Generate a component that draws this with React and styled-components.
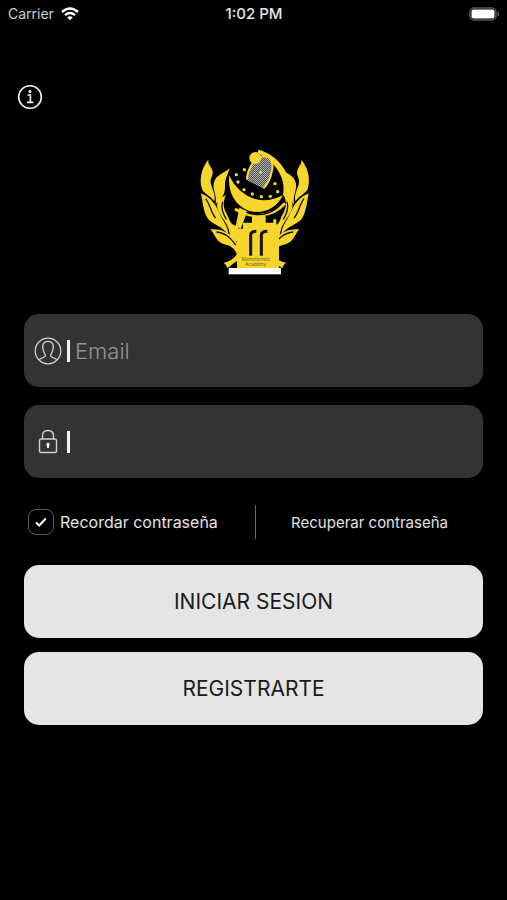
import React, { useState } from 'react';
import styled, { createGlobalStyle } from 'styled-components';

const GlobalStyle = createGlobalStyle`
  * {
    box-sizing: border-box;
  }

  body {
    margin: 0;
    background: #000000;
    font-family: Inter, 'Liberation Sans', sans-serif;
  }
`;

const Screen = styled.div`
  min-height: 100vh;
  background: #000000;
  color: #e6e6e6;
`;

const StatusBar = styled.header`
  display: grid;
  grid-template-columns: 1fr auto 1fr;
  align-items: center;
  height: 27px;
  padding: 0 7px 0 8px;
  font-size: 14px;
`;

const Carrier = styled.div`
  display: flex;
  align-items: center;
  gap: 6px;
  color: #d0d0d0;
`;

const Time = styled.time`
  font-size: 15px;
  font-weight: 500;
`;

const Battery = styled.svg`
  justify-self: end;
`;

const TopBar = styled.div`
  display: flex;
  padding: 57px 17px 0;
`;

const InfoButton = styled.button`
  display: flex;
  padding: 0;
  border: none;
  background: none;
  color: #f2f2f2;
  cursor: pointer;
`;

const Logo = styled.svg`
  display: block;
  margin: 34px auto;
`;

const Form = styled.form`
  display: flex;
  flex-direction: column;
  padding: 0 24px;
`;

const Field = styled.label`
  display: flex;
  align-items: center;
  height: 73px;
  margin-bottom: 18px;
  padding: 0 10px;
  border-radius: 15px;
  background: #333333;
`;

const FieldIcon = styled.span`
  display: flex;
  justify-content: center;
  width: 28px;
  color: #d0d0d0;
`;

const Bar = styled.span`
  width: 3px;
  height: 22px;
  margin: 0 5px;
  background: #f2f2f2;
`;

const Input = styled.input`
  flex: 1;
  min-width: 0;
  padding: 0;
  border: none;
  outline: none;
  background: none;
  color: #ffffff;
  font-family: inherit;
  font-size: 22px;
  font-weight: 300;

  &::placeholder {
    color: #949494;
    opacity: 1;
  }
`;

const Options = styled.div`
  display: grid;
  grid-template-columns: 1fr 1px 1fr;
  align-items: center;
  height: 52px;
  margin-bottom: 17px;
  padding-left: 4px;
`;

const Remember = styled.label`
  display: flex;
  align-items: center;
  gap: 6px;
  font-size: 16px;
  white-space: nowrap;
`;

const Checkbox = styled.input`
  appearance: none;
  width: 26px;
  height: 26px;
  margin: 0;
  border: 1px solid #5c5c5c;
  border-radius: 8px;

  &:checked {
    background: url("data:image/svg+xml,%3Csvg xmlns='http://www.w3.org/2000/svg' viewBox='0 0 24 24' fill='none' stroke='%23ffffff' stroke-width='2'%3E%3Cpath d='M7 12.5l3.2 3 6.6-7'/%3E%3C/svg%3E")
      center / 24px no-repeat;
  }
`;

const Divider = styled.span`
  height: 34px;
  background: #6c6c6c;
`;

const Recover = styled.a`
  justify-self: center;
  color: #e0e0e0;
  font-size: 15px;
  text-decoration: none;
  white-space: nowrap;
`;

const Button = styled.button`
  height: 73px;
  margin-bottom: 14px;
  border: none;
  border-radius: 15px;
  background: #e5e5e5;
  color: #1a1a1a;
  font-family: inherit;
  font-size: 21px;
  font-weight: 400;
  cursor: pointer;
`;

const Branch = () => (
  <g fill="#f6d62c">
    <path d="M40 47C22 69 12 99 20 132C25 149 42 151 58 172C63 149 50 134 47 116C45 101 56 95 52 79C49 66 38 62 40 47Z" />
    <path d="M104 73C84 90 61 93 56 119C53 138 66 153 62 180C78 168 91 152 90 126C89 106 98 94 104 73Z" />
    <path d="M18 148C24 181 27 210 40 226C55 244 80 243 100 274C100 247 84 232 76 213C64 184 48 160 18 148Z" />
    <path d="M93 153C64 166 61 184 73 206C84 227 103 242 105 278L130 296V246C114 246 106 238 101 222C93 202 77 188 93 153Z" />
    <path d="M46 256C60 272 63 290 80 298C97 306 116 302 128 336L137 318C126 288 98 251 46 256Z" />
    <path d="M86 356C104 353 116 344 126 330L140 346C123 350 111 363 97 373C95 364 91 361 86 356Z" />
    <path
      d="M32 164C45 180 48 207 62 222M83 173C76 195 86 211 94 226M64 264C94 267 108 284 122 303"
      fill="none"
      stroke="#171300"
      strokeWidth="4"
    />
  </g>
);

const AcademyLogo = () => (
  <Logo width="118" height="136" viewBox="0 0 354 408" role="img" aria-label="Academy">
    <defs>
      <pattern id="mesh" width="6" height="6" patternUnits="userSpaceOnUse">
        <rect width="6" height="6" fill="#b4b4b4" />
        <path d="M0 0h3v3h-3zM3 3h3v3h-3z" fill="#4b4b4b" />
      </pattern>
    </defs>
    <Branch />
    <g transform="matrix(-1 0 0 1 359 0)">
      <Branch />
    </g>
    <path
      d="M191 17C236 29 276 67 285 122L281 165L264 153C275 100 239 52 187 27Z"
      fill="#f6d62c"
    />
    <path
      d="M103 94C116 127 148 157 184 166C212 173 239 166 264 153C246 190 213 208 174 203C133 197 96 156 103 94Z"
      fill="#f6d62c"
    />
    <path d="M120 195C164 223 229 223 270 178" fill="none" stroke="#f6d62c" strokeWidth="9" />
    <path d="M133 191L157 202L137 255L122 247Z" fill="#f6d62c" />
    <path d="M171 216H212V236H235V226H244V249H252V372H126V254H144V236H171Z" fill="#f6d62c" />
    <path d="M154 205C197 221 240 209 265 171" fill="none" stroke="#000000" strokeWidth="4" />
    <path
      d="M153 107C155 80 172 42 205 36C231 34 239 60 232 84C228 104 219 121 207 134Z"
      fill="url(#mesh)"
    />
    <path
      d="M156 105C158 78 175 42 203 37C229 35 237 58 230 84C226 104 218 120 205 133"
      fill="none"
      stroke="#f6d62c"
      strokeWidth="6"
    />
    <circle cx="181" cy="42" r="18" fill="#f6d62c" />
    <g fill="#f6d62c">
      <circle cx="148" cy="77" r="5" />
      <circle cx="124" cy="92" r="5" />
      <circle cx="129" cy="114" r="5" />
      <circle cx="147" cy="137" r="5" />
      <circle cx="172" cy="150" r="5" />
      <circle cx="199" cy="158" r="5" />
      <circle cx="226" cy="157" r="5" />
      <circle cx="248" cy="143" r="5" />
      <circle cx="240" cy="119" r="5" />
      <circle cx="197" cy="85" r="4" />
    </g>
    <path
      d="M167 335V274Q167 262 184 262M199 335V274Q199 262 217 262"
      fill="none"
      stroke="#171300"
      strokeWidth="9"
    />
    <g fill="#705f12" fontFamily="Inter, sans-serif" fontSize="14" textAnchor="middle">
      <text x="182" y="350">Mamoferreto</text>
      <text x="182" y="367">Academy</text>
    </g>
    <rect x="101" y="372" width="157" height="19" fill="#ffffff" />
  </Logo>
);

const App = () => {
  const [remember, setRemember] = useState(true);

  return (
    <Screen>
      <GlobalStyle />
      <StatusBar>
        <Carrier>
          Carrier
          <svg width="20" height="14" viewBox="0 0 18 14" fill="none" stroke="#ffffff" strokeWidth="2.4">
            <path d="M1 5Q9-2 17 5M4 8.2Q9 4 14 8.2" />
            <path d="M6.2 10.3Q9 8 11.8 10.3L9 13.2Z" fill="#ffffff" stroke="none" />
          </svg>
        </Carrier>
        <Time>1:02 PM</Time>
        <Battery width="31" height="14" viewBox="0 0 31 14">
          <rect x="1" y="1" width="26" height="12" rx="4" fill="#000000" stroke="#555555" strokeWidth="1.5" />
          <rect x="2.5" y="2.5" width="23" height="9" rx="2" fill="#ffffff" />
          <path d="M29 5Q31 7 29 9Z" fill="#555555" stroke="#555555" />
        </Battery>
      </StatusBar>

      <TopBar>
        <InfoButton type="button" aria-label="Información">
          <svg width="26" height="26" viewBox="0 0 26 26" fill="none" stroke="currentColor" strokeWidth="1.6">
            <circle cx="13" cy="13" r="11.3" />
            <path d="M10.5 11H13.4V18M10 18.4H16.4" />
            <circle cx="13" cy="7.4" r="1.5" fill="currentColor" stroke="none" />
          </svg>
        </InfoButton>
      </TopBar>

      <AcademyLogo />

      <Form onSubmit={(e) => e.preventDefault()}>
        <Field>
          <FieldIcon>
            <svg width="28" height="28" viewBox="0 0 28 28" fill="none" stroke="currentColor" strokeWidth="1.3">
              <circle cx="14" cy="14" r="12.8" />
              <path d="M5 23C7 20 11.5 21 11.5 18.5C11.5 17 9.2 15.5 9 12C7.8 7 10 4.4 14 4.4S20.2 7 19 12C18.8 15.5 16.5 17 16.5 18.5C16.5 21 21 20 23 23" />
            </svg>
          </FieldIcon>
          <Bar />
          <Input type="email" placeholder="Email" aria-label="Email" />
        </Field>
        <Field>
          <FieldIcon>
            <svg width="20" height="26" viewBox="0 0 20 26" fill="none" stroke="currentColor" strokeWidth="1.4">
              <rect x="1.5" y="10" width="17" height="13.5" rx="1.5" />
              <path d="M4.5 10V7Q4.5 1.5 10 1.5T15.5 7V10" />
              <circle cx="10" cy="15.5" r="1.7" fill="#ffffff" stroke="none" />
              <path d="M10 15V19" stroke="#ffffff" strokeWidth="1.8" />
            </svg>
          </FieldIcon>
          <Bar />
          <Input type="password" aria-label="Contraseña" />
        </Field>

        <Options>
          <Remember>
            <Checkbox
              type="checkbox"
              checked={remember}
              onChange={(e) => setRemember(e.target.checked)}
            />
            Recordar contraseña
          </Remember>
          <Divider />
          <Recover href="#recuperar">Recuperar contraseña</Recover>
        </Options>

        <Button type="submit">INICIAR SESION</Button>
        <Button type="button">REGISTRARTE</Button>
      </Form>
    </Screen>
  );
};

export default App;
